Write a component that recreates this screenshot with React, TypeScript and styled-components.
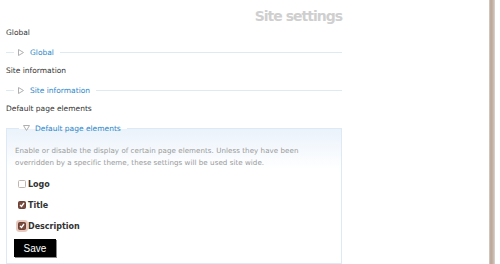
import React from 'react'
import styled, { createGlobalStyle } from 'styled-components'

const GlobalStyle = createGlobalStyle`
    html, body {
        margin: 0;
        padding: 0;
        background: #fff;
    }
    body {
        font-family: "DejaVu Sans", Verdana, sans-serif;
        color: #333;
    }
`;

const Page = styled.div`
    display: flex;
    width: 500px;
    height: 264px;
    overflow: hidden;
`;

const Main = styled.div`
    width: 336px;
    padding-left: 6px;
    display: flex;
    flex-direction: column;
`;

const Title = styled.h1`
    margin: 6px 0 0;
    text-align: right;
    font-family: "DejaVu Sans", sans-serif;
    font-size: 14px;
    font-weight: bold;
    letter-spacing: -1px;
    color: #cfcfcf;
    line-height: 20px;
`;

const Heading = styled.div`
    font-size: 7.5px;
    line-height: 12px;
    margin-top: ${p => p.$top}px;
`;

const Collapsed = styled.div`
    display: flex;
    align-items: center;
    margin-top: 8px;
    height: 12px;
    &::before {
        content: '';
        width: 8px;
        border-top: 1px solid #dfe9f2;
    }
    &::after {
        content: '';
        flex: 1;
        border-top: 1px solid #dfe9f2;
    }
`;

const Arrow = styled.span`
    display: inline-flex;
    width: 10px;
    margin: 0 3px 0 2px;
    justify-content: center;
`;

const LegendText = styled.span`
    font-size: 7.5px;
    color: #2d87c8;
    padding: 0 6px 0 1px;
`;

const Box = styled.fieldset`
    margin: 9px 0 0;
    padding: 0 8px 6px 8px;
    border: 1px solid #dde9f4;
    background: linear-gradient(#eaf2fb, #fff 40px);
    min-width: 0;
    flex: 1;
`;

const Legend = styled.legend`
    display: flex;
    align-items: center;
    padding: 0;
    margin-left: 4px;
`;

const Description = styled.p`
    margin: 12px 0 5px;
    font-size: 7.1px;
    letter-spacing: 0.05px;
    line-height: 12px;
    color: #999;
`;

const Option = styled.label`
    display: flex;
    align-items: center;
    height: 21px;
    font-size: 8px;
    font-weight: bold;
    color: #333;
`;

const Check = styled.span`
    display: inline-flex;
    align-items: center;
    justify-content: center;
    box-sizing: border-box;
    width: 8px;
    height: 8px;
    margin-left: 3px;
    margin-right: 2px;
    border-radius: 1.5px;
    border: 1px solid ${p => (p.$checked ? '#6b4236' : '#bfb6b2')};
    background: ${p => (p.$checked ? '#7b4c3e' : '#fff')};
    box-shadow: ${p => (p.$focus ? '0 0 0 2px #e8c9bf' : 'none')};
`;

const SaveButton = styled.button`
    margin-top: 1px;
    align-self: flex-start;
    width: 42px;
    height: 18px;
    padding: 0;
    margin-left: -1px;
    background: #000;
    color: #fff;
    border: 1px solid #000;
    box-shadow: 1px 1px 0 #888;
    font-family: "Liberation Sans", Arial, sans-serif;
    font-size: 10px;
`;

const Scrollbar = styled.div`
    margin-left: auto;
    margin-right: 5px;
    width: 6px;
    height: 264px;
    background: linear-gradient(to right, #d8d0ca, #b9a597 30%, #c7b6aa 70%, #ddd6d1);
`;

const RightArrow = () => (
    <svg width="6" height="7" viewBox="0 0 6 7">
        <path d="M0.5 0.5 L5.5 3.5 L0.5 6.5 Z" fill="none" stroke="#b0b0b0" strokeWidth="1" />
    </svg>
)

const DownArrow = () => (
    <svg width="7" height="6" viewBox="0 0 7 6">
        <path d="M0.5 0.5 L6.5 0.5 L3.5 5.5 Z" fill="none" stroke="#b0b0b0" strokeWidth="1" />
    </svg>
)

const Tick = () => (
    <svg width="6" height="6" viewBox="0 0 6 6">
        <path d="M1 3 L2.5 4.5 L5 1" fill="none" stroke="#fff" strokeWidth="1.3" />
    </svg>
)

const App = () => {
    return (
        <Page>
            <GlobalStyle />
            <Main>
                <Title>Site settings</Title>
                <Heading $top={1}>Global</Heading>
                <Collapsed>
                    <Arrow><RightArrow /></Arrow>
                    <LegendText>Global</LegendText>
                </Collapsed>
                <Heading $top={7}>Site information</Heading>
                <Collapsed>
                    <Arrow><RightArrow /></Arrow>
                    <LegendText>Site information</LegendText>
                </Collapsed>
                <Heading $top={7}>Default page elements</Heading>
                <Box>
                    <Legend>
                        <Arrow><DownArrow /></Arrow>
                        <LegendText>Default page elements</LegendText>
                    </Legend>
                    <Description>
                        Enable or disable the display of certain page elements. Unless they have been
                        overridden by a specific theme, these settings will be used site wide.
                    </Description>
                    <Option><Check />Logo</Option>
                    <Option><Check $checked><Tick /></Check>Title</Option>
                    <Option><Check $checked $focus><Tick /></Check>Description</Option>
                    <SaveButton>Save</SaveButton>
                </Box>
            </Main>
            <Scrollbar />
        </Page>
    )
}

export default App
